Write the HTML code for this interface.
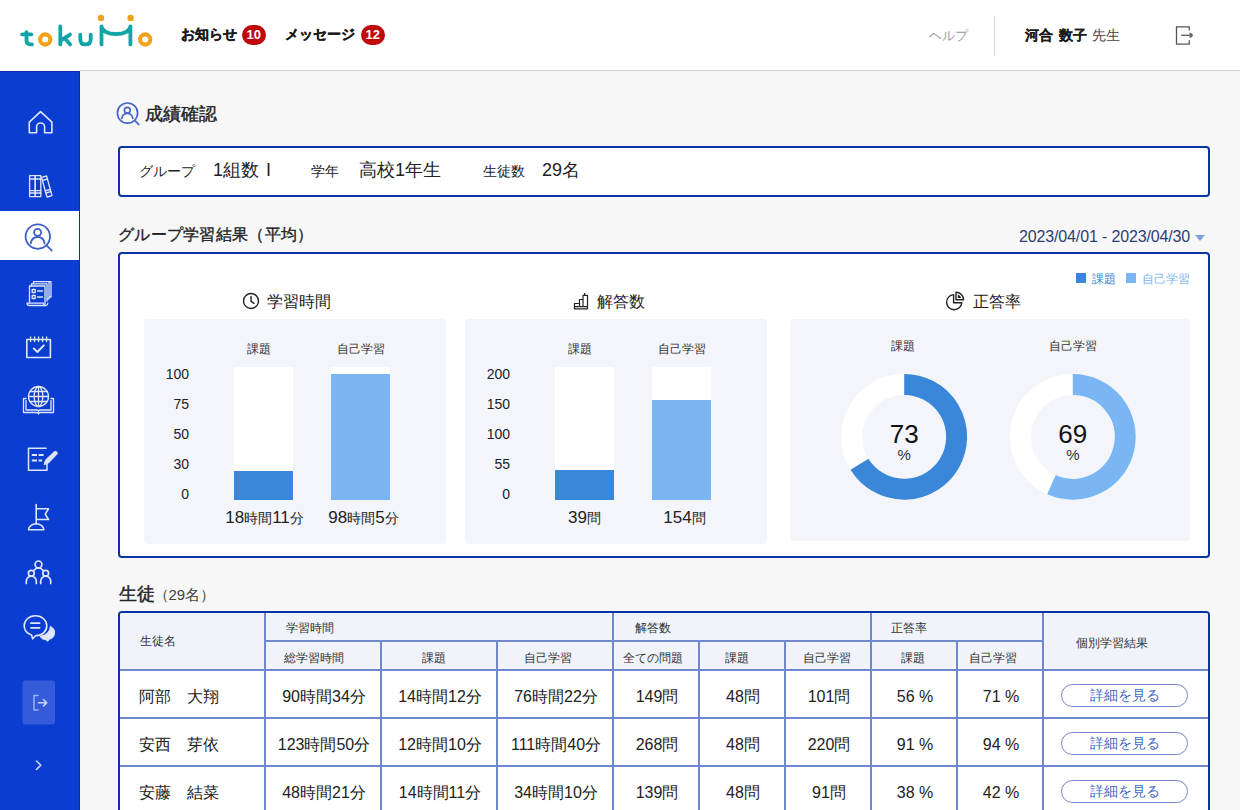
<!DOCTYPE html>
<html lang="ja">
<head>
<meta charset="utf-8">
<title>tokuMo 成績確認</title>
<style>
*{box-sizing:border-box;margin:0;padding:0}
html,body{width:1240px;height:810px;overflow:hidden}
body{font-family:"Liberation Sans",sans-serif;background:#f7f7f7;color:#222;position:relative;font-size:14px}
.abs{position:absolute}
#header{position:absolute;left:0;top:0;width:1240px;height:71px;background:#fff}
#hline{position:absolute;left:80px;top:70px;width:1160px;height:1px;background:#d2d2d2}
#header .nav{position:absolute;top:24px;font-weight:bold;font-size:14px;line-height:20px;color:#1a1a1a;-webkit-text-stroke:0.300px #1a1a1a;white-space:nowrap}
.badge{position:absolute;top:24.500px;width:23.500px;height:20px;border-radius:10px;background:#c00a0a;color:#fff;font-size:13px;font-weight:bold;line-height:20px;text-align:center}
#help{position:absolute;left:929px;top:26px;font-size:13px;line-height:20px;color:#999}
#vdiv{position:absolute;left:994px;top:16px;width:1px;height:40px;background:#d4d4d4}
#user{position:absolute;left:1025px;top:25px;font-size:14px;line-height:20px;color:#444;white-space:nowrap}
#user b{color:#1a1a1a;font-weight:bold;-webkit-text-stroke:0.150px #1a1a1a;margin-right:1px;word-spacing:2px}
#side{position:absolute;left:0;top:71px;width:80px;height:739px;background:#0b3dd0;border-top:1px solid #0a2ea6;border-right:1px solid #0a2ea6}
#side .active{position:absolute;left:0;top:139px;width:79px;height:49px;background:#fff}
#side svg{position:absolute}
#title{position:absolute;left:145px;top:102px;font-size:18px;line-height:24px;font-weight:normal;-webkit-text-stroke:0.400px #222;color:#222}
.box{position:absolute;left:118px;width:1092px;background:#fff;border:2px solid #0b33a6;border-radius:4px}
#grp{top:146px;height:51px}
#grp span{position:absolute;white-space:nowrap;color:#222}
.lb{font-size:14px;line-height:20px;top:13px}
.vl{font-size:18px;line-height:24px;top:10px}
#h2{position:absolute;left:118px;top:224px;letter-spacing:0.3px;font-size:16px;line-height:22px;font-weight:normal;-webkit-text-stroke:0.350px #222;color:#222}
#date{position:absolute;right:50px;top:226px;font-size:16px;letter-spacing:-0.150px;line-height:22px;color:#2c3e78;white-space:nowrap}
#date i{position:absolute;right:-15px;top:8.500px;border:5px solid transparent;border-top:6px solid #7f9fe0;border-bottom:0}
#chart{top:252px;height:306px}
.sub{position:absolute;background:#f3f5fa;border-radius:4px}
.ct{position:absolute;margin:1px 0 0 0.500px;top:37px;font-size:16px;line-height:22px;color:#222;white-space:nowrap}
.cl{position:absolute;font-size:12px;line-height:16px;color:#333;white-space:nowrap;text-align:center}
.ax{position:absolute;font-size:14px;line-height:16px;color:#222;text-align:right;width:40px}
.bar{position:absolute;background:#fff}
.bar i{position:absolute;left:0;right:0;bottom:0;display:block}
.bv{position:absolute;font-size:17px;line-height:22px;color:#222;white-space:nowrap;text-align:center}
.bv small{font-size:14px}
.dn{position:absolute;width:60px;text-align:center;font-size:26px;line-height:30px;color:#111}
.dp{position:absolute;width:60px;text-align:center;font-size:15px;line-height:16px;margin-top:1px;color:#333}
#tbl{position:absolute;left:118px;top:611px;width:1092px;height:210px;border:2px solid #0b33a6;border-radius:4px 4px 0 0;background:#fff;overflow:hidden}
.ln{position:absolute;display:block;background:#7088cd}
.th{position:absolute;font-size:12px;line-height:18px;color:#333;white-space:nowrap}
.td{position:absolute;margin:1.500px 0 0 1px;font-size:16px;line-height:24px;color:#222;white-space:nowrap}
.btn{position:absolute;width:127px;height:23px;border:1px solid #7589c9;border-radius:12px;background:#fff;color:#4666c4;font-size:14px;line-height:21px;text-align:center;white-space:nowrap}
#h3{position:absolute;left:119px;top:581px;font-size:18px;line-height:26px;font-weight:normal;-webkit-text-stroke:0.400px #222;color:#222;white-space:nowrap}
#h3 span{font-size:15px;font-weight:normal;color:#444;-webkit-text-stroke:0;margin-left:-1.500px}
</style>
</head>
<body>
<div id="header">
  <svg class="abs" style="left:10px;top:5px" width="160" height="60" viewBox="0 0 160 60" fill="none" stroke-linecap="round" stroke-linejoin="round" stroke-width="3.800">
    <g stroke="#12a5a8">
      <path d="M16.500 27.100V35.600q0 3.800 3.800 3.800h1.700"/><path d="M12.200 29.400H21.300"/>
      <path d="M50.300 21.300V39.400M60 29.600l-9.400 6M54.700 33.200l5.500 6.200"/>
      <path d="M70.300 29.600v4.600q0 5.200 5.200 5.200t5.200-5.200V29.600"/>
      <path d="M91.500 21.300V39.400M120.400 21.300V39.400M91.500 21.500C92 26 98 29 106 29S120 26 120.400 21.500"/>
    </g>
    <g stroke="#f0a21a" stroke-width="4.100"><circle cx="35.200" cy="34.500" r="5.100"/><circle cx="135.200" cy="34.500" r="5.100"/></g>
    <circle cx="91" cy="12.900" r="3.200" fill="#f0a21a"/><circle cx="120.600" cy="12.900" r="3.200" fill="#f0a21a"/>
  </svg>
  <div class="nav" style="left:181px">お知らせ</div><div class="badge" style="left:242px">10</div>
  <div class="nav" style="left:285px">メッセージ</div><div class="badge" style="left:361px">12</div>
  <div id="help">ヘルプ</div>
  <div id="vdiv"></div>
  <div id="user"><b>河合 数子</b> 先生</div>
  <svg class="abs" style="left:1172px;top:23px" width="24" height="24" viewBox="0 0 24 24" fill="none" stroke="#555" stroke-width="1.300"><path d="M17.200 7.600V3.800H4.500v17.300h12.700v-3.800"/><path d="M9.200 12.300h8.500"/><path d="M17.500 9.500q3.300.800 3.300 2.800t-3.300 2.800Z" fill="#666" stroke="none"/></svg>
</div>
<div id="hline"></div>
<div id="side">
  <div class="active"></div>
  <svg style="left:0;top:-1px" width="80" height="739" viewBox="0 71 80 739" fill="none" stroke="#dfe6fb" stroke-width="1.6" stroke-linejoin="round" stroke-linecap="round">
    <!-- home -->
    <path d="M29.300 122.200L40.600 111.600L51.900 122.200V132.800H44.600V127a4 4 0 0 0-8 0v5.800H29.300Z"/>
    <!-- books -->
    <g stroke-width="1.300"><rect x="29.600" y="175.600" width="5.600" height="21"/><rect x="35.200" y="175.600" width="5.600" height="21"/><path d="M29.600 179h11.200M29.600 193h11.200M29.600 190.600h11.200"/>
    <path d="M41.600 177.300l5-1.300 5.400 19.600-5 1.400Z"/><path d="M42.500 180.300l5-1.300M45.800 193l5-1.300M45.200 190.800l5-1.300"/></g>
    <!-- user search (active) -->
    <g stroke="#3f5fc4" stroke-width="1.800"><circle cx="37.800" cy="236.600" r="12.200"/><path d="M46.600 245.300l5.200 5.300"/><circle cx="37.600" cy="232.300" r="3.500"/><path d="M30.800 243.300q1-6.300 6.900-6.300t6.900 6.300"/></g>
    <!-- checklist docs -->
    <g stroke-width="1.300"><path d="M29.500 302.500V286h15.500v17.500"/><path d="M31.500 286v-2.200h15.500V301M33.500 283.800v-2.200H49v17.200h-2M51 297h-2M49 281.600h2V297"/><path d="M27 303.200h16.500q.3 2.300 2.500 2.300H29.500q-2.300 0-2.500-2.300ZM46 305.500q1.800-.2 1.800-2.300"/>
    <path d="M32.200 289.500h3v3h-3zM32.200 295.500h3v3h-3zM37.500 291h5M37.500 297h5"/></g>
    <!-- calendar check -->
    <path d="M26.800 339.500h23.600v18H26.800Z"/><path d="M30.600 337v4.500M34.600 337v4.500M38.600 337v4.500M42.600 337v4.500M46.600 337v4.500" stroke-width="1.300"/><path d="M33.800 348.600l3.600 3.400 6.400-6.600" stroke-width="2"/>
    <!-- globe book -->
    <g stroke-width="1.300"><circle cx="38.500" cy="396.500" r="10"/><ellipse cx="38.500" cy="396.500" rx="4.300" ry="10"/><path d="M38.500 386.500v20M28.500 396.500h20M30 391.500h17M30 401.500h17"/>
    <path d="M26 398.500h-2.500v14h12.500q2.500 0 2.500 1.500 0-1.500 2.500-1.500h12.500v-14H51"/><path d="M26 400.500v9.500h10.500q2 0 2 1.500 0-1.500 2-1.500H51v-9.500"/></g>
    <!-- edit doc -->
    <path d="M47 463.500v6.700H28.500v-22H46" stroke-width="1.500"/><path d="M31.800 455h5.200M31.800 460.500h5.200M38.600 455h5M38.600 460.500h3.500" stroke-width="2.200" stroke-linecap="butt"/><path d="M44.200 464.300l1.300-4.300 8.700-8.300q1.300-1 2.500.2t.2 2.400L48.500 463Z" fill="#dfe6fb" stroke-width="1"/>
    <!-- flag -->
    <path d="M36.200 504.500v19.500M36.200 508.800h12.300l-3.300 5.300 3.300 5.400H36.200"/><path d="M28.500 529.800a7.700 6 0 0 1 15.400 0Z"/>
    <!-- people -->
    <g stroke-width="1.700"><circle cx="38.500" cy="564.400" r="3.400"/><circle cx="31.300" cy="573.200" r="2.900"/><circle cx="45.700" cy="573.200" r="2.900"/><path d="M26.300 583.500v-2.300a5 5 0 0 1 10 0v2.300M40.700 583.500v-2.300a5 5 0 0 1 10 0v2.300M33.800 570.500q1.800-2.500 4.700-2.500t4.700 2.500"/></g>
    <!-- chat -->
    <path d="M50.500 626.500a7 6.800 0 0 1-1.300 12.800l-1.300 2-2-1.500a8 8 0 0 1-6-3.300q10-2 10.600-10Z" fill="#dfe6fb" stroke-width="1"/>
    <path d="M35.500 615.800c6.500 0 11.300 4.500 11.300 10s-4.800 10-11.300 10l-2.800 3-1.200-3.700c-4.500-1.600-7.300-5-7.300-9.300 0-5.500 4.800-10 11.300-10Z"/><path d="M31 623.200h8.500M31 627.800h8.500" stroke-width="1.800"/>
    <!-- logout btn -->
    <rect x="22.500" y="680.500" width="32.500" height="44" rx="3" fill="#345bd9" stroke="none"/>
    <path d="M38 695.500h-4v14.500h4" stroke="#9fb3ee" stroke-width="1.500"/><path d="M38.500 702.700h8M43.500 699.500l3.200 3.200-3.200 3.200" stroke="#c9d4f6" stroke-width="1.600"/>
    <!-- chevron -->
    <path d="M36.500 761l4.300 4.200-4.300 4.200" stroke="#c9d4f6" stroke-width="1.600"/>
  </svg>
</div>
<svg class="abs" style="left:115px;top:101px" width="26" height="26" viewBox="0 0 26 26" fill="none" stroke="#4766c8" stroke-width="1.700" stroke-linecap="round"><circle cx="12.500" cy="12.100" r="10.100"/><path d="M19.700 19.300l4.100 4.300"/><circle cx="12.300" cy="9.300" r="2.900"/><path d="M6.800 17.300q1-4.800 5.500-4.800t5.500 4.800"/></svg>
<div id="title">成績確認</div>
<div class="box" id="grp">
  <span class="lb" style="left:19px">グループ</span><span class="vl" style="left:93px;word-spacing:2px">1組数 I</span>
  <span class="lb" style="left:191px">学年</span><span class="vl" style="left:239px">高校1年生</span>
  <span class="lb" style="left:363px">生徒数</span><span class="vl" style="left:422px">29名</span>
</div>
<div id="h2">グループ学習結果（平均）</div>
<div id="date">2023/04/01 - 2023/04/30<i></i></div>
<div class="box" id="chart">
  <div class="sub" style="left:24px;top:65px;width:302px;height:224.5px"></div>
  <div class="sub" style="left:345px;top:65px;width:301.5px;height:224.5px"></div>
  <div class="sub" style="left:670px;top:65px;width:400px;height:222px"></div>
  <!-- legend -->
  <i class="abs" style="left:955.800px;top:19px;width:10px;height:10px;background:#3a87da"></i>
  <div class="cl" style="left:972px;top:16.5px;color:#3a87da">課題</div>
  <i class="abs" style="left:1005.800px;top:19px;width:10px;height:10px;background:#7ab6f3"></i>
  <div class="cl" style="left:1022px;top:16.5px;color:#7ab6f3">自己学習</div>
  <!-- titles -->
  <svg class="abs" style="left:122px;top:38px" width="18" height="18" viewBox="0 0 18 18" fill="none" stroke="#222" stroke-width="1.400" stroke-linecap="round" stroke-linejoin="round"><circle cx="9" cy="9" r="7.500"/><path d="M9 4.500V9.300l3 2"/></svg>
  <div class="ct" style="left:146px;top:36px">学習時間</div>
  <svg class="abs" style="left:453px;top:38px" width="16" height="18" viewBox="0 0 16 18" fill="none" stroke="#222" stroke-width="1.200" stroke-linejoin="round"><path d="M1.500 16.800V11.500H6.500V7.500H10V3.300H14.500V16.800Z"/><path d="M6.500 11.500V14.700M10 7.500V14.700M1.500 14.700H14.500M11.700 1V3.300"/></svg>
  <div class="ct" style="left:476px;top:36px">解答数</div>
  <svg class="abs" style="left:825px;top:37px" width="20" height="20" viewBox="0 0 20 20" fill="none" stroke="#222" stroke-width="1.400" stroke-linejoin="round"><path d="M8.600 3.600A7.600 7.600 0 1 0 16.800 11.800H8.600Z"/><path d="M11 1.200A7.600 7.600 0 0 1 18.600 8.800H11Z"/><path d="M12.800 3.600A5 5 0 0 1 16.200 7H12.800Z" fill="#222" stroke="none"/></svg>
  <div class="ct" style="left:852px;top:36px">正答率</div>
  <div class="cl" style="left:109px;top:87px;width:59px">課題</div>
  <div class="cl" style="left:211px;top:87px;width:59px">自己学習</div>
  <div class="ax" style="left:29px;top:112px">100</div>
  <div class="ax" style="left:29px;top:142px">75</div>
  <div class="ax" style="left:29px;top:172px">50</div>
  <div class="ax" style="left:29px;top:202px">30</div>
  <div class="ax" style="left:29px;top:232px">0</div>
  <div class="bar" style="left:114px;top:112.5px;width:59px;height:133.500px"><i style="height:29px;background:#3a87da"></i></div>
  <div class="bar" style="left:211px;top:112.5px;width:59px;height:133.500px"><i style="height:126.5px;background:#7ab6f3"></i></div>
  <div class="bv" style="left:85px;top:253px;width:119px">18<small>時間</small>11<small>分</small></div>
  <div class="bv" style="left:184px;top:253px;width:119px">98<small>時間</small>5<small>分</small></div>
  <div class="cl" style="left:430px;top:87px;width:59px">課題</div>
  <div class="cl" style="left:532px;top:87px;width:59px">自己学習</div>
  <div class="ax" style="left:350px;top:112px">200</div>
  <div class="ax" style="left:350px;top:142px">150</div>
  <div class="ax" style="left:350px;top:172px">100</div>
  <div class="ax" style="left:350px;top:202px">55</div>
  <div class="ax" style="left:350px;top:232px">0</div>
  <div class="bar" style="left:435px;top:112.5px;width:59px;height:133.500px"><i style="height:30.5px;background:#3a87da"></i></div>
  <div class="bar" style="left:532px;top:112.5px;width:59px;height:133.500px"><i style="height:100.5px;background:#7ab6f3"></i></div>
  <div class="bv" style="left:405px;top:253px;width:119px">39<small>問</small></div>
  <div class="bv" style="left:505px;top:253px;width:119px">154<small>問</small></div>
  <div class="cl" style="left:753px;top:84px;width:60px">課題</div>
  <div class="cl" style="left:923px;top:84px;width:60px">自己学習</div>
  <svg class="abs" style="left:710px;top:111px" width="320" height="145" viewBox="830 365 320 145"><circle cx="904.2" cy="436.8" r="52.4" fill="none" stroke="#fff" stroke-width="21"/><path d="M904.2 384.40000000000003A52.4 52.4 0 1 1 859.52 464.18" fill="none" stroke="#3a87da" stroke-width="21"/><circle cx="1072.8" cy="436.8" r="52.4" fill="none" stroke="#fff" stroke-width="21"/><path d="M1072.8 384.40000000000003A52.4 52.4 0 1 1 1051.49 484.67" fill="none" stroke="#7ab6f3" stroke-width="21"/></svg>
  <div class="dn" style="left:754.2px;top:165px">73</div><div class="dp" style="left:754.2px;top:192px">%</div>
  <div class="dn" style="left:922.8px;top:165px">69</div><div class="dp" style="left:922.8px;top:192px">%</div>
</div>
<div id="h3">生徒<span>（29名）</span></div>
<div id="tbl">
  <div class="abs" style="left:0;top:0;width:1088px;height:56px;background:#f0f3fa"></div>
  <i class="ln" style="left:145px;top:27px;width:778px;height:2px"></i>
  <i class="ln" style="left:0px;top:55.5px;width:1088px;height:2px"></i>
  <i class="ln" style="left:0px;top:104px;width:1088px;height:2px"></i>
  <i class="ln" style="left:0px;top:152px;width:1088px;height:2px"></i>
  <i class="ln" style="left:144px;top:0px;width:2px;height:197px"></i>
  <i class="ln" style="left:492px;top:0px;width:2px;height:197px"></i>
  <i class="ln" style="left:750px;top:0px;width:2px;height:197px"></i>
  <i class="ln" style="left:922px;top:0px;width:2px;height:197px"></i>
  <i class="ln" style="left:260px;top:28px;width:2px;height:169px"></i>
  <i class="ln" style="left:376px;top:28px;width:2px;height:169px"></i>
  <i class="ln" style="left:578px;top:28px;width:2px;height:169px"></i>
  <i class="ln" style="left:664px;top:28px;width:2px;height:169px"></i>
  <i class="ln" style="left:836px;top:28px;width:2px;height:169px"></i>
  <div class="th" style="left:19.5px;top:19px">生徒名</div>
  <div class="th" style="left:166px;top:5.5px">学習時間</div>
  <div class="th" style="left:515px;top:5.5px">解答数</div>
  <div class="th" style="left:771px;top:5.5px">正答率</div>
  <div class="th" style="left:942px;top:20.5px;width:100px;text-align:center">個別学習結果</div>
  <div class="th" style="left:144px;top:35.5px;width:100px;text-align:center">総学習時間</div>
  <div class="th" style="left:263.7px;top:35.5px;width:100px;text-align:center">課題</div>
  <div class="th" style="left:378.2px;top:35.5px;width:100px;text-align:center">自己学習</div>
  <div class="th" style="left:482.5px;top:35.5px;width:100px;text-align:center">全ての問題</div>
  <div class="th" style="left:566.8px;top:35.5px;width:100px;text-align:center">課題</div>
  <div class="th" style="left:657.4px;top:35.5px;width:100px;text-align:center">自己学習</div>
  <div class="th" style="left:743.3px;top:35.5px;width:100px;text-align:center">課題</div>
  <div class="th" style="left:822.6px;top:35.5px;width:100px;text-align:center">自己学習</div>
  <div class="td" style="left:18px;top:70.4px">阿部　大翔</div>
  <div class="td" style="left:145.0px;top:70.4px;width:116px;text-align:center">90時間34分</div>
  <div class="td" style="left:261.0px;top:70.4px;width:116px;text-align:center">14時間12分</div>
  <div class="td" style="left:377.0px;top:70.4px;width:116px;text-align:center">76時間22分</div>
  <div class="td" style="left:478.0px;top:70.4px;width:116px;text-align:center">149問</div>
  <div class="td" style="left:564.0px;top:70.4px;width:116px;text-align:center">48問</div>
  <div class="td" style="left:650.0px;top:70.4px;width:116px;text-align:center">101問</div>
  <div class="td" style="left:736.0px;top:70.4px;width:116px;text-align:center">56 %</div>
  <div class="td" style="left:822.0px;top:70.4px;width:116px;text-align:center">71 %</div>
  <div class="btn" style="left:941px;top:70.9px">詳細を見る</div>
  <div class="td" style="left:18px;top:118.4px">安西　芽依</div>
  <div class="td" style="left:145.0px;top:118.4px;width:116px;text-align:center">123時間50分</div>
  <div class="td" style="left:261.0px;top:118.4px;width:116px;text-align:center">12時間10分</div>
  <div class="td" style="left:377.0px;top:118.4px;width:116px;text-align:center">111時間40分</div>
  <div class="td" style="left:478.0px;top:118.4px;width:116px;text-align:center">268問</div>
  <div class="td" style="left:564.0px;top:118.4px;width:116px;text-align:center">48問</div>
  <div class="td" style="left:650.0px;top:118.4px;width:116px;text-align:center">220問</div>
  <div class="td" style="left:736.0px;top:118.4px;width:116px;text-align:center">91 %</div>
  <div class="td" style="left:822.0px;top:118.4px;width:116px;text-align:center">94 %</div>
  <div class="btn" style="left:941px;top:118.9px">詳細を見る</div>
  <div class="td" style="left:18px;top:166.4px">安藤　結菜</div>
  <div class="td" style="left:145.0px;top:166.4px;width:116px;text-align:center">48時間21分</div>
  <div class="td" style="left:261.0px;top:166.4px;width:116px;text-align:center">14時間11分</div>
  <div class="td" style="left:377.0px;top:166.4px;width:116px;text-align:center">34時間10分</div>
  <div class="td" style="left:478.0px;top:166.4px;width:116px;text-align:center">139問</div>
  <div class="td" style="left:564.0px;top:166.4px;width:116px;text-align:center">48問</div>
  <div class="td" style="left:650.0px;top:166.4px;width:116px;text-align:center">91問</div>
  <div class="td" style="left:736.0px;top:166.4px;width:116px;text-align:center">38 %</div>
  <div class="td" style="left:822.0px;top:166.4px;width:116px;text-align:center">42 %</div>
  <div class="btn" style="left:941px;top:166.9px">詳細を見る</div>
</div>
</body>
</html>
